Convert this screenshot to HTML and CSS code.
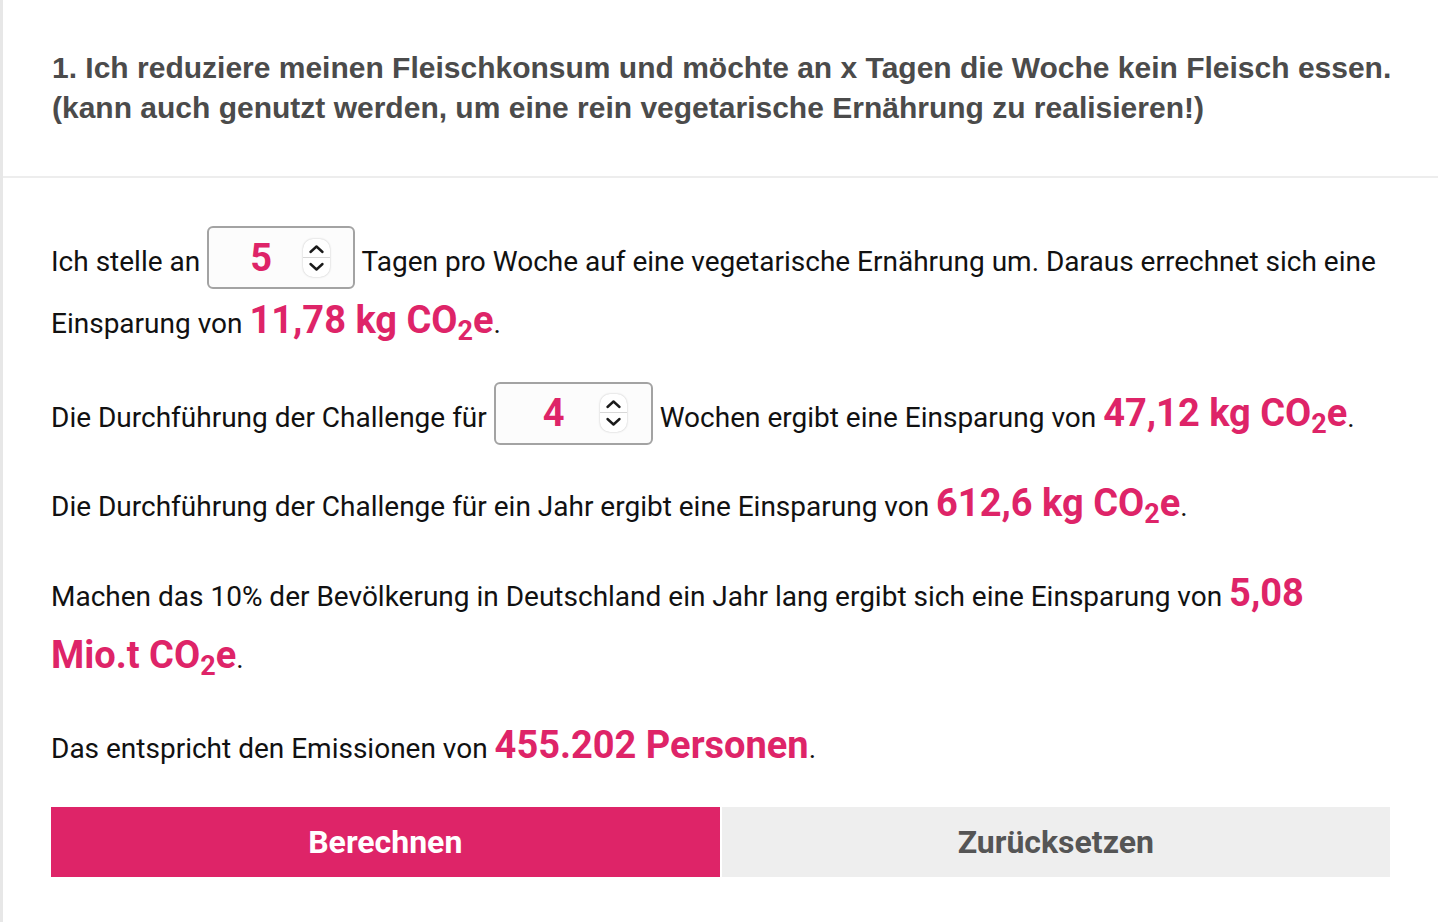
FILE: index.html
```html
<!DOCTYPE html>
<html lang="de">

<head>
    <meta charset="UTF-8">
    <meta name="viewport" content="width=device-width, initial-scale=1.0">
    <title>Fleischkonsum reduzieren</title>
    <link rel="stylesheet" href="styles.css">
</head>

<body>
    <div class="page">
        <!-- Frage -->
        <header class="question">
            <h2>1. Ich reduziere meinen Fleischkonsum und möchte an x Tagen die Woche kein Fleisch essen.<br>(kann auch genutzt werden, um eine rein vegetarische Ernährung zu realisieren!)</h2>
        </header>

        <!-- Rechner -->
        <div class="calc">
            <p>Ich stelle an
                <span class="num-input num-days">
                    <input type="text" id="days" value="5">
                    <span class="spinner">
                        <svg viewBox="0 0 27 38" width="27" height="38">
                            <path d="M7.5 13 L13.5 7.5 L19.5 13" />
                            <path d="M7.5 25 L13.5 30.5 L19.5 25" />
                        </svg>
                    </span>
                </span>
                Tagen pro Woche auf eine vegetarische Ernährung um. Daraus errechnet sich eine Einsparung von <span class="hl">11,78 kg CO<sub>2</sub>e</span>.
            </p>

            <p>Die Durchführung der Challenge für
                <span class="num-input num-weeks">
                    <input type="text" id="weeks" value="4">
                    <span class="spinner">
                        <svg viewBox="0 0 27 38" width="27" height="38">
                            <path d="M7.5 13 L13.5 7.5 L19.5 13" />
                            <path d="M7.5 25 L13.5 30.5 L19.5 25" />
                        </svg>
                    </span>
                </span>
                Wochen ergibt eine Einsparung von <span class="hl">47,12 kg CO<sub>2</sub>e</span>.
            </p>

            <p>Die Durchführung der Challenge für ein Jahr ergibt eine Einsparung von <span class="hl">612,6 kg CO<sub>2</sub>e</span>.</p>

            <p>Machen das 10% der Bevölkerung in Deutschland ein Jahr lang ergibt sich eine Einsparung von <span class="hl">5,08 Mio.t CO<sub>2</sub>e</span>.</p>

            <p>Das entspricht den Emissionen von <span class="hl">455.202 Personen</span>.</p>

            <div class="buttons">
                <button type="button" class="btn btn-calc">Berechnen</button>
                <button type="button" class="btn btn-reset">Zurücksetzen</button>
            </div>
        </div>
    </div>
</body>

</html>
```

FILE: styles.css
```css
/* Reset */
* {
    box-sizing: border-box;
    margin: 0;
    padding: 0;
}

body {
    font-family: Roboto, "Noto Sans", Arial, sans-serif;
    background-color: #fff;
    color: #111;
}

.page {
    min-height: 922px;
    border-left: 3px solid #e7e7e7;
}

/* Frage */
.question {
    padding: 48px 46px 48px 49px;
    border-bottom: 2px solid #ededed;
}

.question h2 {
    font-family: "Liberation Sans", Arial, sans-serif;
    font-size: 30px;
    font-weight: 700;
    line-height: 40px;
    color: #4b4b4b;
}

/* Rechner */
.calc {
    padding: 48px 48px 40px 48px;
}

.calc p {
    font-size: 28px;
    line-height: 60px;
    margin-bottom: 28px;
}

.hl {
    font-size: 38px;
    font-weight: 700;
    line-height: 57px;
    color: #de2468;
}

.hl sub {
    font-size: 27px;
    line-height: 0;
    vertical-align: -7px;
}

/* Zahlenfeld */
.num-input {
    display: inline-flex;
    align-items: center;
    vertical-align: baseline;
    height: 63px;
    border: 2px solid #a3a3a3;
    border-radius: 6px;
    background-color: #fcfcfc;
}

.num-days {
    width: 148px;
}

.num-weeks {
    width: 159px;
}

.num-input input {
    width: 94px;
    padding-left: 10px;
    border: none;
    background: transparent;
    outline: none;
    font-family: Roboto, Arial, sans-serif;
    font-size: 38px;
    font-weight: 700;
    color: #de2468;
    text-align: center;
}

.num-weeks input {
    width: 104px;
    padding-left: 12px;
}

.spinner {
    display: block;
    width: 27px;
    height: 38px;
    border-radius: 10px;
    background-color: #fff;
    box-shadow: 0 0 2px rgba(0, 0, 0, 0.25);
    position: relative;
}

.spinner::after {
    content: "";
    position: absolute;
    left: 0;
    right: 0;
    top: 18px;
    height: 1px;
    background-color: #d8d8d8;
}

.spinner svg {
    display: block;
}

.spinner path {
    fill: none;
    stroke: #1a1a1a;
    stroke-width: 2.4;
    stroke-linecap: round;
    stroke-linejoin: round;
}

/* Buttons */
.buttons {
    display: flex;
    margin-top: 3px;
}

.btn {
    flex: 1;
    height: 70px;
    border: none;
    font-family: Roboto, Arial, sans-serif;
    font-size: 32px;
    font-weight: 700;
    cursor: pointer;
}

.btn-calc {
    background-color: #de2468;
    color: #fff;
    margin-right: 2px;
}

.btn-reset {
    background-color: #eeeeee;
    color: #555;
}
```
